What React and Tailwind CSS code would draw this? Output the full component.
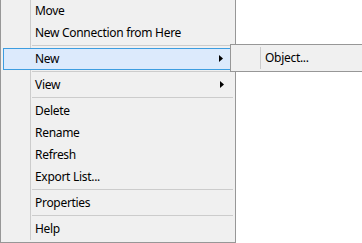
import React from "react";

const items = [
  { label: "Move" },
  { label: "New Connection from Here" },
  { sep: true },
  { label: "New", sub: true, hot: true },
  { sep: true },
  { label: "View", sub: true },
  { sep: true },
  { label: "Delete" },
  { label: "Rename" },
  { label: "Refresh" },
  { label: "Export List..." },
  { sep: true },
  { label: "Properties" },
  { sep: true },
  { label: "Help" },
];

const Arrow = () => (
  <svg width="4" height="7" viewBox="0 0 4 7" className="mr-[9px]">
    <path d="M0 0 L4 3.5 L0 7 Z" fill="#000" />
  </svg>
);

const Row = ({ item }) => {
  if (item.sep) {
    return (
      <div className="flex h-[4px]">
        <div className="w-[27px] shrink-0" />
        <div className="flex-1 border-l border-[#cccccc] pl-[1px] pt-[1px]">
          <div className="h-px bg-[#cccccc]" />
        </div>
      </div>
    );
  }
  return (
    <div
      className={`flex h-[22px] items-center ${
        item.hot ? "border border-[#3d9de0] bg-[#dceafc]" : ""
      }`}
    >
      <div className={`shrink-0 ${item.hot ? "w-[26px]" : "w-[27px]"}`} />
      <div
        className={`flex h-full flex-1 items-center justify-between pb-px pl-[4px] ${
          item.hot ? "border-l border-transparent" : "border-l border-[#cccccc]"
        }`}
      >
        <span>{item.label}</span>
        {item.sub && <Arrow />}
      </div>
    </div>
  );
};

const App = () => {
  return (
    <div
      className="relative h-[243px] w-[362px] overflow-hidden bg-white text-[12px] leading-none tracking-[-0.3px] text-black"
      style={{ fontFamily: '"Noto Sans", "Open Sans", sans-serif' }}
    >
      {/* main context menu */}
      <div className="mt-[-3px] w-[236px] border border-[#979797] bg-[#f0f0f0] p-[2px]">
        {items.map((item, idx) => (
          <Row key={idx} item={item} />
        ))}
      </div>

      {/* submenu */}
      <div className="absolute left-[230px] top-[44px] w-[150px] border border-[#979797] bg-[#f0f0f0] p-[2px]">
        <Row item={{ label: "Object..." }} />
      </div>
    </div>
  );
};

export default App;
